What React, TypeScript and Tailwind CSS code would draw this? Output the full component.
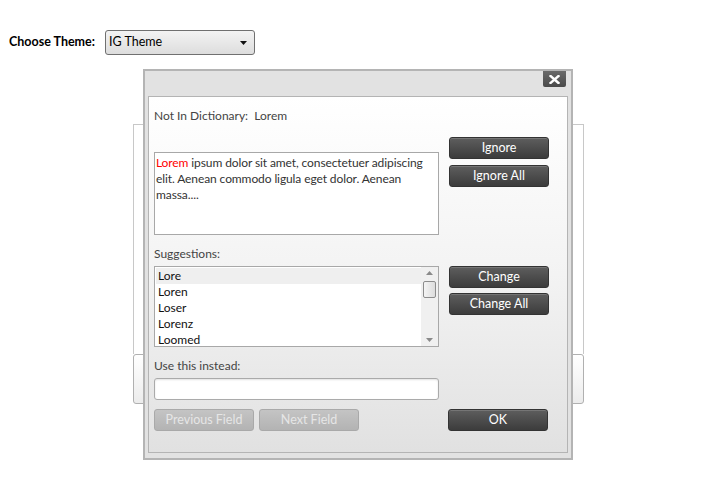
const font = { fontFamily: "Lato, 'Open Sans', sans-serif" };

function DarkButton({ label }: { label: string }) {
  return (
    <button className="flex h-[22px] w-[100px] items-center justify-center rounded-[3px] border border-[#333] bg-gradient-to-b from-[#5e5e5e] to-[#3c3c3c] text-[12.5px] text-white shadow-[inset_0_1px_0_rgba(255,255,255,0.15)]">
      {label}
    </button>
  );
}

function DisabledButton({ label }: { label: string }) {
  return (
    <button className="flex h-[22px] w-[100px] items-center justify-center rounded-[3px] border border-[#a9a9a9] bg-gradient-to-b from-[#c4c4c4] to-[#b3b3b3] text-[12.5px] text-[#e6e6e6]">
      {label}
    </button>
  );
}

function Triangle({ dir }: { dir: "up" | "down" }) {
  return (
    <svg width="7" height="4" viewBox="0 0 7 4">
      {dir === "up" ? <path d="M0 4 L3.5 0 L7 4 Z" fill="#8a8a8a" /> : <path d="M0 0 L3.5 4 L7 0 Z" fill="#8a8a8a" />}
    </svg>
  );
}

export default function App() {
  const suggestions = ["Lore", "Loren", "Loser", "Lorenz", "Loomed"];
  return (
    <div className="relative h-[500px] w-[715px] bg-white" style={font}>
      {/* theme picker */}
      <div className="flex items-center pl-[9px] pt-[30px]">
        <span className="w-[96px] text-[12.5px] font-bold text-black">Choose Theme:</span>
        <div className="flex h-[25px] w-[150px] items-center justify-between rounded-[3px] border border-[#707070] bg-gradient-to-b from-[#f3f3f3] to-[#dddddd] pl-[3px] pr-[7px] text-[12.5px] text-black">
          <span>IG Theme</span>
          <svg width="7" height="4" viewBox="0 0 7 4">
            <path d="M0 0 L3.5 4 L7 0 Z" fill="#111" />
          </svg>
        </div>
      </div>

      {/* background sample panel */}
      <div className="ml-[133px] mt-[69px] flex w-[451px] flex-col">
        <div className="h-[230px] border-x border-t border-[#c8c8c8]" />
        <div className="h-[50px] rounded-[3px] border border-[#b0b0b0] bg-gradient-to-b from-white to-[#ececec]" />
      </div>

      {/* spell check dialog */}
      <div className="absolute left-[143px] top-[69px] flex h-[391px] w-[430px] flex-col border-[2px] border-[#b4b4b4] bg-[#e2e2e2] px-[3px] pb-[5px]">
        <div className="flex h-[25px] items-start justify-end pr-[2px]">
          <button className="flex h-[16px] w-[23px] items-center justify-center rounded-b-[2px] bg-gradient-to-b from-[#6a6a6a] to-[#4a4a4a]">
            <svg width="11" height="9" viewBox="0 0 11 9">
              <path d="M1.5 1 L9.5 8 M9.5 1 L1.5 8" stroke="#fff" strokeWidth="2.4" strokeLinecap="square" />
            </svg>
          </button>
        </div>

        <div className="flex flex-1 flex-col border border-[#b4b4b4] bg-gradient-to-b from-white via-[#f3f3f3] to-[#e1e1e1] px-[5px] pt-[11px] text-[12px] text-[#444]">
          <div className="leading-[16px]">Not In Dictionary:&nbsp; Lorem</div>

          <div className="mt-[13px] flex gap-[10px]">
            <div className="mt-[15px] h-[83px] w-[285px] border border-[#a8a8a8] bg-white px-[1px] pt-[2px] leading-[16px] tracking-[-0.1px] text-[#333]">
              <span className="text-[#f00]">Lorem</span> ipsum dolor sit amet, consectetuer adipiscing elit. Aenean commodo ligula eget dolor. Aenean massa....
            </div>
            <div className="flex flex-col gap-[6px]">
              <DarkButton label="Ignore" />
              <DarkButton label="Ignore All" />
            </div>
          </div>

          <div className="mt-[11px] leading-[16px]">Suggestions:</div>
          <div className="mt-[4px] flex gap-[10px]">
            <div className="flex h-[81px] w-[285px] border border-[#a8a8a8] bg-white">
              <div className="flex flex-1 flex-col pt-[1px] pl-[1px] text-[#111]">
                {suggestions.map((s, i) => (
                  <div key={s} className={`h-[16px] pl-[2px] leading-[16px] ${i === 0 ? "bg-[#efefef]" : ""}`}>
                    {s}
                  </div>
                ))}
              </div>
              <div className="flex w-[17px] flex-col items-center justify-between bg-[#f0f0f0] py-[4px]">
                <Triangle dir="up" />
                <div className="-mt-[34px] h-[17px] w-[13px] rounded-[2px] border border-[#8c8c8c] bg-gradient-to-r from-[#f4f4f4] to-[#dcdcdc]" />
                <Triangle dir="down" />
              </div>
            </div>
            <div className="flex flex-col gap-[5px]">
              <DarkButton label="Change" />
              <DarkButton label="Change All" />
            </div>
          </div>

          <div className="mt-[11px] leading-[16px]">Use this instead:</div>
          <div className="mt-[4px] h-[22px] w-[285px] rounded-[3px] border border-[#aaaaaa] bg-white shadow-[inset_0_1px_2px_rgba(0,0,0,0.12)]" />

          <div className="mt-[9px] flex">
            <div className="flex gap-[5px]">
              <DisabledButton label="Previous Field" />
              <DisabledButton label="Next Field" />
            </div>
            <div className="ml-auto mr-[14px]">
              <DarkButton label="OK" />
            </div>
          </div>
        </div>
      </div>
    </div>
  );
}
